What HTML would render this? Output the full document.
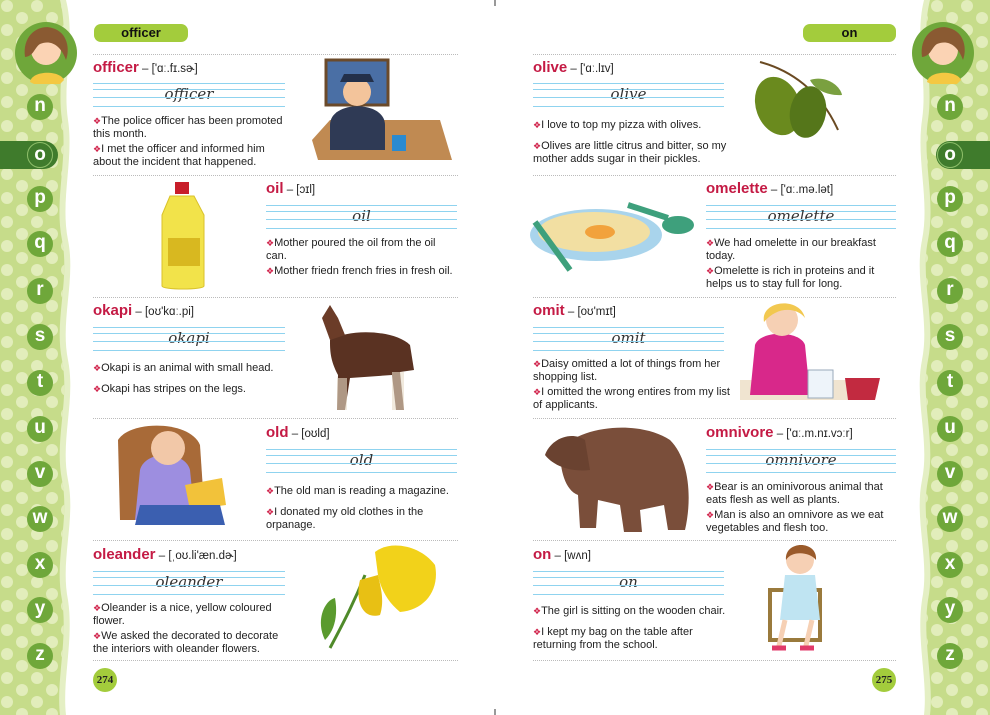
<!DOCTYPE html>
<html><head><meta charset="utf-8"><style>
*{margin:0;padding:0;box-sizing:border-box}
body{width:990px;height:715px;position:relative;overflow:hidden;background:#fff;font-family:"Liberation Sans","DejaVu Sans",sans-serif;color:#222}
.abs{position:absolute}
.pill{position:absolute;height:18px;background:#a3cc3c;border-radius:7px;font-weight:bold;font-size:13px;text-align:center;line-height:18px;color:#111}
.dot{position:absolute;height:0;border-top:1px dotted #bbb}
.t{position:absolute;font-size:11.5px;white-space:nowrap;color:#222}
.t b{color:#c41a44;font-size:15px}
.r{position:absolute;height:24px;border-top:1.5px solid #8fd3ef;border-bottom:1.5px solid #8fd3ef}
.r:before,.r:after{content:"";position:absolute;left:0;right:0;border-top:1.5px solid #8fd3ef}
.r:before{top:5px}.r:after{top:13px}
.r i{position:absolute;left:0;right:0;top:1px;text-align:center;font-family:"DejaVu Serif",serif;font-style:italic;font-size:15px;color:#333;letter-spacing:0}
.s{position:absolute;font-size:11px;line-height:13px;color:#222}
.s p{margin-bottom:2px}
.s p:before{content:"❖";color:#d0224a;font-size:9px}
.c{position:absolute;width:26px;height:26px;border-radius:50%;background:#6fa73a;color:#fff;font-weight:bold;font-size:19px;text-align:center;line-height:24px}
.pn{position:absolute;width:24px;height:24px;border-radius:50%;background:#a3cc3c;font-weight:bold;font-size:11px;text-align:center;line-height:24px;font-family:"Liberation Serif",serif}
</style></head><body>

<svg class="abs" style="left:0;top:0" width="990" height="715">
<defs><pattern id="d" width="30" height="24" patternUnits="userSpaceOnUse"><circle cx="7" cy="6" r="6" fill="#e2edbb"/><circle cx="22" cy="18" r="6" fill="#e2edbb"/></pattern></defs>
<path d="M0 0H66C76 40 62 80 68 120C74 160 60 200 68 240C76 280 60 320 68 360C76 400 60 440 68 480C76 520 60 560 68 600C74 640 62 680 66 715H0Z" fill="#e4efc4"/>
<path d="M0 0H60C70 40 56 80 62 120C68 160 54 200 62 240C70 280 54 320 62 360C70 400 54 440 62 480C70 520 54 560 62 600C68 640 56 680 60 715H0Z" fill="#c6dc8a"/>
<path d="M0 0H60C70 40 56 80 62 120C68 160 54 200 62 240C70 280 54 320 62 360C70 400 54 440 62 480C70 520 54 560 62 600C68 640 56 680 60 715H0Z" fill="url(#d)"/>
<path d="M990 0H924C914 40 928 80 922 120C916 160 930 200 922 240C914 280 930 320 922 360C914 400 930 440 922 480C914 520 930 560 922 600C916 640 928 680 924 715H990Z" fill="#e4efc4"/>
<path d="M990 0H930C920 40 934 80 928 120C922 160 936 200 928 240C920 280 936 320 928 360C920 400 936 440 928 480C920 520 936 560 928 600C922 640 934 680 930 715H990Z" fill="#c6dc8a"/>
<path d="M990 0H930C920 40 934 80 928 120C922 160 936 200 928 240C920 280 936 320 928 360C920 400 936 440 928 480C920 520 936 560 928 600C922 640 934 680 930 715H990Z" fill="url(#d)"/>
<rect x="0" y="141" width="58" height="28" rx="14" fill="#3f7b2c"/><rect x="0" y="141" width="30" height="28" fill="#3f7b2c"/>
<rect x="936" y="141" width="54" height="28" rx="14" fill="#3f7b2c"/><rect x="960" y="141" width="30" height="28" fill="#3f7b2c"/>
<circle cx="46" cy="53" r="31" fill="#6fa73a"/><path d="M30 82C32 70 60 70 64 80L60 84H34Z" fill="#f4c842"/><circle cx="46" cy="50" r="15" fill="#fbd3b4"/><path d="M25 57C22 34 40 24 52 28C68 32 70 50 66 60C60 44 50 40 40 44C34 48 34 56 25 57Z" fill="#8a5a32"/>
<circle cx="943" cy="53" r="31" fill="#6fa73a"/><path d="M927 82C929 70 957 70 961 80L957 84H931Z" fill="#f4c842"/><circle cx="943" cy="50" r="15" fill="#fbd3b4"/><path d="M922 57C919 34 937 24 949 28C965 32 967 50 963 60C957 44 947 40 937 44C931 48 931 56 922 57Z" fill="#8a5a32"/>
<line x1="495" y1="0" x2="495" y2="6" stroke="#333"/><line x1="495" y1="709" x2="495" y2="715" stroke="#333"/>
</svg>

<div class="c" style="left:27px;top:94px">n</div><div class="c" style="left:27px;top:142px;background:#3f7b2c;border:1px solid #8fbf6a">o</div>
<div class="c" style="left:27px;top:186px">p</div><div class="c" style="left:27px;top:231px">q</div><div class="c" style="left:27px;top:278px">r</div><div class="c" style="left:27px;top:324px">s</div><div class="c" style="left:27px;top:370px">t</div><div class="c" style="left:27px;top:416px">u</div><div class="c" style="left:27px;top:461px">v</div><div class="c" style="left:27px;top:506px">w</div><div class="c" style="left:27px;top:552px">x</div><div class="c" style="left:27px;top:597px">y</div><div class="c" style="left:27px;top:643px">z</div>
<div class="c" style="left:937px;top:94px">n</div><div class="c" style="left:937px;top:142px;background:#3f7b2c;border:1px solid #8fbf6a">o</div>
<div class="c" style="left:937px;top:186px">p</div><div class="c" style="left:937px;top:231px">q</div><div class="c" style="left:937px;top:278px">r</div><div class="c" style="left:937px;top:324px">s</div><div class="c" style="left:937px;top:370px">t</div><div class="c" style="left:937px;top:416px">u</div><div class="c" style="left:937px;top:461px">v</div><div class="c" style="left:937px;top:506px">w</div><div class="c" style="left:937px;top:552px">x</div><div class="c" style="left:937px;top:597px">y</div><div class="c" style="left:937px;top:643px">z</div>

<div class="pill" style="left:94px;top:24px;width:94px">officer</div>
<div class="pill" style="left:803px;top:24px;width:93px">on</div>

<div class="dot" style="left:93px;top:54px;width:365px"></div><div class="dot" style="left:93px;top:175px;width:365px"></div><div class="dot" style="left:93px;top:297px;width:365px"></div><div class="dot" style="left:93px;top:418px;width:365px"></div><div class="dot" style="left:93px;top:540px;width:365px"></div><div class="dot" style="left:93px;top:660px;width:365px"></div>
<div class="dot" style="left:533px;top:54px;width:363px"></div><div class="dot" style="left:533px;top:175px;width:363px"></div><div class="dot" style="left:533px;top:297px;width:363px"></div><div class="dot" style="left:533px;top:418px;width:363px"></div><div class="dot" style="left:533px;top:540px;width:363px"></div><div class="dot" style="left:533px;top:660px;width:363px"></div>

<div class="t" style="left:93px;top:59px"><b>officer</b> – ['ɑː.fɪ.sɚ]</div>
<div class="r" style="left:93px;top:83px;width:192px"><i>officer</i></div>
<div class="s" style="left:93px;top:115px;width:200px"><p>The police officer has been promoted this month.</p><p>I met the officer and informed him about the incident that happened.</p></div>

<div class="t" style="left:266px;top:180px"><b>oil</b> – [ɔɪl]</div>
<div class="r" style="left:266px;top:205px;width:191px"><i>oil</i></div>
<div class="s" style="left:266px;top:237px;width:192px"><p>Mother poured the oil from the oil can.</p><p>Mother friedn french fries in fresh oil.</p></div>

<div class="t" style="left:93px;top:302px"><b>okapi</b> – [oʊ'kɑː.pi]</div>
<div class="r" style="left:93px;top:327px;width:192px"><i>okapi</i></div>
<div class="s" style="left:93px;top:362px;width:200px"><p style="margin-bottom:8px">Okapi is an animal with small head.</p><p>Okapi has stripes on the legs.</p></div>

<div class="t" style="left:266px;top:424px"><b>old</b> – [oʊld]</div>
<div class="r" style="left:266px;top:449px;width:191px"><i>old</i></div>
<div class="s" style="left:266px;top:485px;width:192px"><p style="margin-bottom:8px">The old man is reading a magazine.</p><p>I donated my old clothes in the orpanage.</p></div>

<div class="t" style="left:93px;top:546px"><b>oleander</b> – [ˌoʊ.li'æn.dɚ]</div>
<div class="r" style="left:93px;top:571px;width:192px"><i>oleander</i></div>
<div class="s" style="left:93px;top:602px;width:200px"><p>Oleander is a nice, yellow coloured flower.</p><p>We asked the decorated to decorate the interiors with oleander flowers.</p></div>

<div class="t" style="left:533px;top:59px"><b>olive</b> – ['ɑː.lɪv]</div>
<div class="r" style="left:533px;top:83px;width:191px"><i>olive</i></div>
<div class="s" style="left:533px;top:119px;width:200px"><p style="margin-bottom:8px">I love to top my pizza with olives.</p><p>Olives are little citrus and bitter, so my mother adds sugar in their pickles.</p></div>

<div class="t" style="left:706px;top:180px"><b>omelette</b> – ['ɑː.mə.lət]</div>
<div class="r" style="left:706px;top:205px;width:190px"><i>omelette</i></div>
<div class="s" style="left:706px;top:237px;width:196px"><p>We had omelette in our breakfast today.</p><p>Omelette is rich in proteins and it helps us to stay full for long.</p></div>

<div class="t" style="left:533px;top:302px"><b>omit</b> – [oʊ'mɪt]</div>
<div class="r" style="left:533px;top:327px;width:191px"><i>omit</i></div>
<div class="s" style="left:533px;top:358px;width:200px"><p>Daisy omitted a lot of things from her shopping list.</p><p>I omitted the wrong entires from my list of applicants.</p></div>

<div class="t" style="left:706px;top:424px"><b>omnivore</b> – ['ɑː.m.nɪ.vɔːr]</div>
<div class="r" style="left:706px;top:449px;width:190px"><i>omnivore</i></div>
<div class="s" style="left:706px;top:481px;width:196px"><p>Bear is an ominivorous animal that eats flesh as well as plants.</p><p>Man is also an omnivore as we eat vegetables and flesh too.</p></div>

<div class="t" style="left:533px;top:546px"><b>on</b> – [wʌn]</div>
<div class="r" style="left:533px;top:571px;width:191px"><i>on</i></div>
<div class="s" style="left:533px;top:605px;width:200px"><p style="margin-bottom:8px">The girl is sitting on the wooden chair.</p><p>I kept my bag on the table after returning from the school.</p></div>

<div class="pn" style="left:93px;top:668px">274</div>
<div class="pn" style="left:872px;top:668px">275</div>

<svg class="abs" style="left:0;top:0" width="990" height="715">
<rect x="326" y="60" width="62" height="45" fill="#4a6fa5" stroke="#6b4a2a" stroke-width="3"/>
<path d="M312 140L330 120H440L452 160H318Z" fill="#c08a52"/>
<path d="M330 125C330 100 385 100 385 125V150H330Z" fill="#2f3a55"/>
<circle cx="357" cy="92" r="14" fill="#f3c49b"/><path d="M340 82H374L370 74H344Z" fill="#23304a"/>
<rect x="392" y="135" width="14" height="16" fill="#2a8ad0"/>
<rect x="175" y="182" width="14" height="12" fill="#c81e2a"/>
<path d="M170 196H194L204 215V286C204 290 162 290 162 286V215Z" fill="#f2e34a" stroke="#d9c22a"/>
<rect x="168" y="238" width="32" height="28" fill="#d8b820"/>
<path d="M330 340C350 328 395 330 410 345L414 370L400 372L404 410H396L392 375L350 378L345 410H337L338 375C330 360 330 350 330 340Z" fill="#5a3222"/>
<path d="M330 340L322 318L330 305L338 318L345 335Z" fill="#6b3c28"/>
<path d="M337 378H347V410H337ZM392 372H404V410H392Z" fill="#e8dcc8" opacity=".6"/>
<path d="M118 440C130 420 190 420 200 445L205 520H120Z" fill="#a86a38"/>
<path d="M140 470C145 450 185 450 190 470L195 520H135Z" fill="#9d8ee0"/>
<circle cx="168" cy="448" r="17" fill="#f2c8a8"/>
<path d="M185 485L222 478L226 505L190 510Z" fill="#f2c23a"/>
<path d="M140 505H220L225 525H135Z" fill="#3b5fb0"/>
<path d="M330 648C345 620 355 600 365 575" stroke="#4f8a2a" stroke-width="3" fill="none"/>
<path d="M375 552C390 540 420 545 435 565C440 590 425 610 400 612C385 600 380 585 378 575Z" fill="#f2d21a"/>
<path d="M360 580C355 600 362 620 380 615C385 600 380 585 378 575Z" fill="#e8c014"/>
<path d="M325 640C315 620 325 600 335 598C338 615 335 630 325 640Z" fill="#5a9a2e"/>
<path d="M760 62C790 70 820 90 838 130" stroke="#6a4a22" stroke-width="2" fill="none"/>
<ellipse cx="778" cy="106" rx="22" ry="30" fill="#6a8a1e" transform="rotate(-20 778 106)"/>
<ellipse cx="808" cy="112" rx="18" ry="26" fill="#55761a" transform="rotate(10 808 112)"/>
<path d="M810 80C825 75 840 85 842 95C828 96 815 90 810 80Z" fill="#7aa040"/>
<ellipse cx="596" cy="235" rx="66" ry="26" fill="#a9d4ec"/>
<ellipse cx="594" cy="232" rx="56" ry="20" fill="#f2dfa2"/>
<ellipse cx="600" cy="232" rx="15" ry="7" fill="#f2a23c"/>
<path d="M628 205L668 218" stroke="#3ea07c" stroke-width="6"/><ellipse cx="678" cy="225" rx="16" ry="9" fill="#3ea07c"/>
<path d="M535 222L570 270" stroke="#3ea07c" stroke-width="6"/>
<rect x="740" y="380" width="125" height="20" fill="#f0e4d0"/>
<path d="M755 345C760 330 800 330 805 345L810 395H750Z" fill="#d8288a"/>
<circle cx="782" cy="320" r="16" fill="#f6d0b4"/><path d="M764 322C760 300 800 296 805 318C798 308 778 305 764 322Z" fill="#f2c850"/>
<rect x="808" y="370" width="25" height="28" fill="#eef4fa" stroke="#9ab"/>
<path d="M845 378H880L875 400H848Z" fill="#c22a40"/>
<path d="M560 450C580 425 640 420 670 440C690 460 692 500 685 530H668L664 505L640 510L642 532H624L620 505L598 500L596 528H580L578 495C565 490 560 470 560 450Z" fill="#7a4e3a"/>
<path d="M545 455C550 440 570 430 585 440L590 470C575 472 555 468 545 455Z" fill="#6a4230"/>
<rect x="770" y="590" width="50" height="50" fill="none" stroke="#9a7a3c" stroke-width="4"/>
<circle cx="800" cy="560" r="14" fill="#f6d0b4"/><path d="M786 560C784 540 818 540 816 560C810 552 792 550 786 560Z" fill="#9a5a2a"/>
<path d="M785 575H815L820 620H780Z" fill="#bfe4f2"/>
<path d="M785 620L778 650M812 620L805 650" stroke="#f6d0b4" stroke-width="5"/>
<path d="M772 648H786M800 648H814" stroke="#e03a6a" stroke-width="5"/>
</svg>
</body></html>
